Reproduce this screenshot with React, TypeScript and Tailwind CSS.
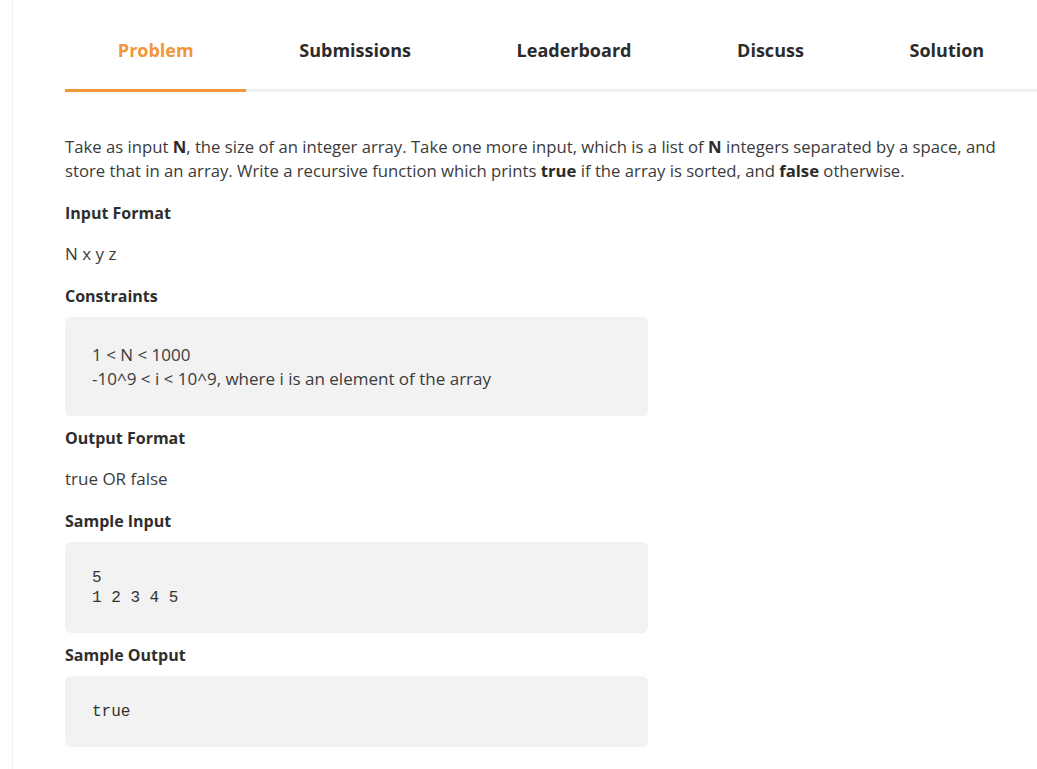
import React from 'react';

const tabs = ['Problem', 'Submissions', 'Leaderboard', 'Discuss', 'Solution'];

const Heading: React.FC<{ children: React.ReactNode; className?: string }> = ({ children, className = '' }) => (
  <h3 className={`text-[16px] leading-[24px] font-bold text-[#2e2e2e] ${className}`}>{children}</h3>
);

export default function App() {
  const active = 'Problem';

  return (
    <div className="min-h-[769px] bg-white pl-[12px] font-['Open_Sans','Noto_Sans',sans-serif] text-[#3b3b3b]">
      <div className="min-h-[769px] border-l border-[#efefef] pl-[52px]">
        {/* Tabs */}
        <nav className="flex">
          {tabs.map((t) => (
            <button
              key={t}
              className={`flex-auto text-center pt-[36px] pb-[25px] text-[18px] leading-[28px] font-bold border-b-[3px] ${
                t === active ? 'text-[#f2963b] border-[#f2963b]' : 'text-[#2b2b2b] border-[#f0f0f0]'
              }`}
            >
              {t}
            </button>
          ))}
        </nav>

        {/* Problem statement */}
        <div className="pr-[20px]">
          <p className="mt-[43px] text-[16.7px] leading-[24px]">
            Take as input <strong className="font-bold text-[#2b2b2b]">N</strong>, the size of an integer array. Take one more input, which is a list of{' '}
            <strong className="font-bold text-[#2b2b2b]">N</strong> integers separated by a space, and store that in an array. Write a recursive function which prints{' '}
            <strong className="font-bold text-[#2b2b2b]">true</strong> if the array is sorted, and <strong className="font-bold text-[#2b2b2b]">false</strong> otherwise.
          </p>

          <Heading className="mt-[18px]">Input Format</Heading>
          <p className="mt-[17px] text-[17px] leading-[24px]">N x y z</p>

          <Heading className="mt-[18px]">Constraints</Heading>
          <div className="mt-[9px] w-[583px] rounded-md bg-[#f2f2f2] pl-[27px] pr-4 pt-[26px] pb-[25px] text-[17px] leading-[24px]">
            <div>1 &lt; N &lt; 1000</div>
            <div>-10^9 &lt; i &lt; 10^9, where i is an element of the array</div>
          </div>

          <Heading className="mt-[10px]">Output Format</Heading>
          <p className="mt-[17px] text-[17px] leading-[24px]">true OR false</p>

          <Heading className="mt-[18px]">Sample Input</Heading>
          <pre className="mt-[9px] w-[583px] rounded-md bg-[#f2f2f2] pl-[27px] pt-[26px] pb-[25px] font-['Liberation_Mono',monospace] text-[16px] leading-[20px] text-[#333]">
{`5
1 2 3 4 5`}
          </pre>

          <Heading className="mt-[10px]">Sample Output</Heading>
          <pre className="mt-[9px] w-[583px] rounded-md bg-[#f2f2f2] pl-[27px] pt-[26px] pb-[25px] font-['Liberation_Mono',monospace] text-[16px] leading-[20px] text-[#333]">
{`true`}
          </pre>
        </div>
      </div>
    </div>
  );
}
